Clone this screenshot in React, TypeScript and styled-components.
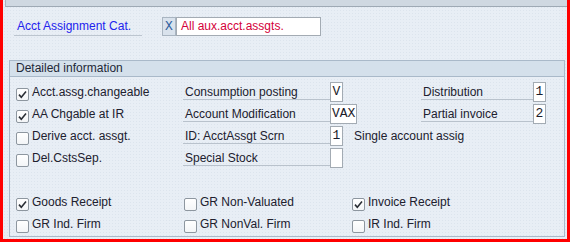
import * as React from 'react';
import styled, { createGlobalStyle } from 'styled-components';

const GlobalStyle = createGlobalStyle`
  html, body {
    margin: 0;
    padding: 0;
  }
  body {
    font-family: "Liberation Sans", Arial, sans-serif;
    font-size: 12px;
    color: #20202e;
  }
`;

const Screen = styled.div`
  width: 570px;
  height: 242px;
  box-sizing: border-box;
  border: 3px solid #ff0000;
  border-top: 0;
  background-color: #e8eef5;
  background-image: radial-gradient(#dce4ed 0.7px, transparent 0.9px);
  background-size: 3px 3px;
  display: flex;
  flex-direction: column;
  overflow: hidden;
`;

const TopBar = styled.div`
  height: 6px;
  margin-left: 2px;
  background: #cfd8e1;
  border-left: 1px solid #aab4be;
  border-bottom: 1px solid #9ea9b4;
`;

const HeaderRow = styled.div`
  display: flex;
  height: 19px;
  margin-top: 10px;
  padding-left: 11px;
`;

const HeaderLabel = styled.div`
  width: 128px;
  height: 19px;
  box-sizing: border-box;
  padding-left: 3px;
  line-height: 19px;
  color: #2222ee;
  border-bottom: 1px solid #bcc5cf;
`;

const KeyBox = styled.div`
  margin-left: 20px;
  width: 14px;
  box-sizing: border-box;
  border: 1px solid #a9b5c1;
  background: #d9e2ec;
  color: #2f5f9f;
  font-family: "Liberation Mono", "Courier New", monospace;
  font-size: 13px;
  line-height: 17px;
  text-align: center;
`;

const TextInput = styled.div`
  width: 145px;
  box-sizing: border-box;
  border: 1px solid #a3abb3;
  background: #ffffff;
  color: #d4003a;
  padding-left: 4px;
  line-height: 17px;
`;

const Group = styled.div`
  flex: 1;
  margin: 24px 2px 2px 6px;
  border: 1px solid #a9b9c9;
  display: flex;
  flex-direction: column;
`;

const GroupTitle = styled.div`
  height: 15px;
  line-height: 15px;
  padding-left: 6px;
  background: #d4e0eb;
  border-bottom: 1px solid #a9b9c9;
  color: #1e2838;
`;

const GroupBody = styled.div`
  padding: 4px 0 0 6px;
`;

const DetailGrid = styled.div`
  display: grid;
  grid-template-columns: 167px 147px 91px 112px auto;
  grid-auto-rows: 22px;
`;

const BottomGrid = styled.div`
  display: grid;
  grid-template-columns: 168px 168px 168px;
  grid-auto-rows: 22px;
  margin-top: 22px;
`;

const CheckItem = styled.label`
  display: flex;
  align-items: center;
  gap: 3px;
  line-height: 22px;
  white-space: nowrap;
`;

const Box = styled.span`
  width: 13px;
  height: 13px;
  box-sizing: border-box;
  margin-top: 4px;
  border: 1px solid #8d969f;
  border-radius: 2px;
  background: linear-gradient(#ffffff, #f3f5f7);
  display: flex;
  align-items: center;
  justify-content: center;
`;

const FieldLabel = styled.div`
  height: 19px;
  box-sizing: border-box;
  padding-left: 2px;
  line-height: 22px;
  border-bottom: 1px solid #b9c2cc;
  white-space: nowrap;
`;

const ValueCell = styled.div`
  display: flex;
  align-items: flex-start;
  white-space: nowrap;
`;

const ValueBox = styled.div`
  min-width: 13px;
  height: 20px;
  box-sizing: border-box;
  margin-top: 1px;
  padding: 0 1px;
  border: 1px solid #a3abb3;
  background: #ffffff;
  font-family: "Liberation Mono", "Courier New", monospace;
  font-size: 13px;
  line-height: 18px;
  text-align: center;
  color: #1c1c2a;
`;

const Note = styled.span`
  margin-left: 11px;
  line-height: 22px;
`;

const Check: React.FC<{ checked?: boolean; children: React.ReactNode }> = ({ checked, children }) => (
  <CheckItem>
    <Box>
      {checked && (
        <svg width="11" height="11" viewBox="0 0 11 11">
          <path d="M2 5.6 L4.3 8.2 L9 2.6" fill="none" stroke="#2a2e35" strokeWidth="1.6" />
        </svg>
      )}
    </Box>
    <span>{children}</span>
  </CheckItem>
);

const App: React.FC = () => (
  <>
    <GlobalStyle />
    <Screen>
      <TopBar />
      <HeaderRow>
        <HeaderLabel>Acct Assignment Cat.</HeaderLabel>
        <KeyBox>X</KeyBox>
        <TextInput>All aux.acct.assgts.</TextInput>
      </HeaderRow>
      <Group>
        <GroupTitle>Detailed information</GroupTitle>
        <GroupBody>
          <DetailGrid>
            <Check checked>Acct.assg.changeable</Check>
            <FieldLabel>Consumption posting</FieldLabel>
            <ValueCell><ValueBox>V</ValueBox></ValueCell>
            <FieldLabel>Distribution</FieldLabel>
            <ValueCell><ValueBox>1</ValueBox></ValueCell>

            <Check checked>AA Chgable at IR</Check>
            <FieldLabel>Account Modification</FieldLabel>
            <ValueCell><ValueBox>VAX</ValueBox></ValueCell>
            <FieldLabel>Partial invoice</FieldLabel>
            <ValueCell><ValueBox>2</ValueBox></ValueCell>

            <Check>Derive acct. assgt.</Check>
            <FieldLabel>ID: AcctAssgt Scrn</FieldLabel>
            <ValueCell>
              <ValueBox>1</ValueBox>
              <Note>Single account assig</Note>
            </ValueCell>
            <div />
            <div />

            <Check>Del.CstsSep.</Check>
            <FieldLabel>Special Stock</FieldLabel>
            <ValueCell><ValueBox /></ValueCell>
          </DetailGrid>
          <BottomGrid>
            <Check checked>Goods Receipt</Check>
            <Check>GR Non-Valuated</Check>
            <Check checked>Invoice Receipt</Check>
            <Check>GR Ind. Firm</Check>
            <Check>GR NonVal. Firm</Check>
            <Check>IR Ind. Firm</Check>
          </BottomGrid>
        </GroupBody>
      </Group>
    </Screen>
  </>
);

export default App;
